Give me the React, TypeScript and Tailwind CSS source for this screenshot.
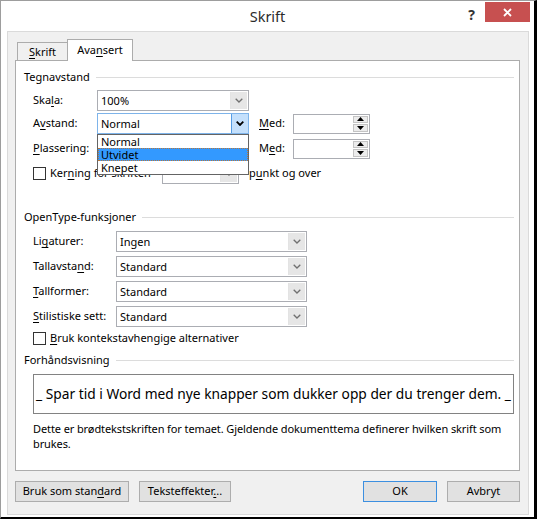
import React from 'react'

const FONT = "font-['Noto_Sans',sans-serif]"

// underlined access key letter
const U = ({ children }: { children: React.ReactNode }) => (
  <span className="underline decoration-1 underline-offset-[2px]">{children}</span>
)

const Chevron = ({ active }: { active?: boolean }) => (
  <svg width="8" height="5" viewBox="0 0 8 5" className={active ? 'text-black' : 'text-[#707070]'}>
    <path
      d="M0.7 0.7 L4 4 L7.3 0.7"
      fill="none"
      stroke="currentColor"
      strokeWidth={active ? 1.8 : 1.3}
    />
  </svg>
)

interface ComboProps {
  value?: string
  width: string
  active?: boolean
  children?: React.ReactNode
}

const Combo: React.FC<ComboProps> = ({ value, width, active, children }) => (
  <div
    className={`relative flex h-[21px] shrink-0 border bg-white ${width} ${
      active ? 'border-[#7eb4ea]' : 'border-[#abadb3]'
    }`}
  >
    <div className="flex-1 pl-[3px] leading-[19px]">{value}</div>
    <div
      className={`flex w-[17px] items-center justify-center border-l ${
        active ? 'border-[#569de5] bg-[#c4e0fc]' : 'my-px mr-px border-[#e3e3e3] bg-[#e6e6e6]'
      }`}
    >
      <Chevron active={active} />
    </div>
    {children}
  </div>
)

const Spin = () => (
  <div className="flex h-[20px] w-[77px] shrink-0 border border-[#abadb3] bg-white">
    <div className="flex-1" />
    <div className="my-px mr-px flex w-[15px] flex-col gap-px">
      <div className="flex flex-1 items-center justify-center border border-[#c4c4c4] bg-[#ececec]">
        <svg width="7" height="4" viewBox="0 0 7 4">
          <path d="M0 4 L3.5 0 L7 4 Z" fill="black" />
        </svg>
      </div>
      <div className="flex flex-1 items-center justify-center border border-[#c4c4c4] bg-[#ececec]">
        <svg width="7" height="4" viewBox="0 0 7 4">
          <path d="M0 0 L7 0 L3.5 4 Z" fill="black" />
        </svg>
      </div>
    </div>
  </div>
)

const Checkbox = () => <div className="h-[13px] w-[13px] shrink-0 border border-[#333] bg-white" />

const GroupHeader = ({ title, className }: { title: string; className: string }) => (
  <div className={`flex h-[16px] items-center pl-[8px] pr-[5px] ${className}`}>
    <span>{title}</span>
    <div className="ml-[6px] h-px flex-1 bg-[#dcdcdc]" />
  </div>
)

const Button = ({ children, width, primary }: { children: React.ReactNode; width: string; primary?: boolean }) => (
  <button
    type="button"
    className={`flex h-[21px] items-center justify-center border bg-[#e1e1e1] ${width} ${
      primary ? 'border-[#3c8fe0]' : 'border-[#adadad]'
    }`}
  >
    {children}
  </button>
)

const openTypeRows = [
  { label: <>Li<U>g</U>aturer:</>, value: 'Ingen' },
  { label: <>Tallavsta<U>n</U>d:</>, value: 'Standard' },
  { label: <><U>T</U>allformer:</>, value: 'Standard' },
  { label: <><U>S</U>tilistiske sett:</>, value: 'Standard' },
]

export default function App() {
  return (
    <div
      className={`${FONT} flex h-[519px] w-[537px] flex-col border-t border-l border-[#9d9d9d] border-r-[3px] border-b-2 border-r-black border-b-black bg-white text-[11px] text-black`}
    >
      {/* Title bar */}
      <div className="grid h-[30px] shrink-0 grid-cols-[1fr_auto_1fr]">
        <div />
        <div className="self-center pt-px text-[14.5px] text-[#2b2b2b]">Skrift</div>
        <div className="flex items-start justify-end pr-[4px]">
          <span className="mt-[3px] mr-[10px] text-[14px] font-bold text-[#333]">?</span>
          <div className="mt-px flex h-[20px] w-[45px] items-center justify-center bg-[#c75050]">
            <svg width="9" height="9" viewBox="0 0 9 9">
              <path d="M1 1 L8 8 M8 1 L1 8" stroke="white" strokeWidth="1.8" />
            </svg>
          </div>
        </div>
      </div>

      {/* Client area */}
      <div className="mr-[5px] mb-[2px] ml-[6px] flex flex-1 flex-col border border-[#dadada] bg-[#f0f0f0] pt-[7px] pr-[8px] pl-[7px]">
        {/* Tabs */}
        <div className="flex h-[21px] items-end pl-[2px]">
          <div className="flex h-[18px] w-[50px] items-center justify-center border-t border-l border-[#acacac] bg-[#f0f0f0] pt-px">
            <span>
              <U>S</U>krift
            </span>
          </div>
          <div className="relative z-10 -mb-px flex h-[22px] w-[66px] items-start justify-center border-x border-t border-[#acacac] bg-white pt-[2px]">
            <span>
              Ava<U>n</U>sert
            </span>
          </div>
        </div>

        {/* Tab panel */}
        <div className="flex h-[411px] flex-col border border-[#acacac] bg-white">
          <GroupHeader title="Tegnavstand" className="mt-[8px]" />

          <div className="mt-[5px] flex h-[21px] items-center pl-[17px]">
            <span className="w-[64px] shrink-0">
              Ska<U>l</U>a:
            </span>
            <Combo value="100%" width="w-[152px]" />
          </div>

          <div className="relative z-20 mt-[2px] flex h-[21px] items-center pl-[17px]">
            <span className="w-[64px] shrink-0">
              A<U>v</U>stand:
            </span>
            <Combo value="Normal" width="w-[152px]" active>
              {/* open drop-down list */}
              <div className="absolute top-[20px] -left-px w-[152px] border border-[#646464] bg-white leading-[13px]">
                <div className="h-[13px] pl-[3px]">Normal</div>
                <div className="h-[13px] border border-dotted border-[#b8763a] bg-[#3399ff] pl-[2px] leading-[11px]">
                  Utvidet
                </div>
                <div className="h-[13px] pl-[3px]">Knepet</div>
              </div>
            </Combo>
            <span className="ml-[10px] w-[34px] shrink-0">
              <U>M</U>ed:
            </span>
            <Spin />
          </div>

          <div className="mt-[4px] flex h-[21px] items-center pl-[17px]">
            <span className="w-[64px] shrink-0">
              <U>P</U>lassering:
            </span>
            <Combo value="" width="w-[152px]" />
            <span className="ml-[10px] w-[34px] shrink-0">
              M<U>e</U>d:
            </span>
            <Spin />
          </div>

          <div className="mt-[4px] flex h-[21px] items-center pl-[17px]">
            <div className="flex w-[129px] shrink-0 items-center gap-[4px]">
              <Checkbox />
              <span>
                Ker<U>n</U>ing for skriften
              </span>
            </div>
            <Combo value="" width="w-[77px]" />
            <span className="ml-[10px]">
              p<U>u</U>nkt og over
            </span>
          </div>

          <GroupHeader title="OpenType-funksjoner" className="mt-[25px]" />

          <div className="mt-[6px] flex flex-col gap-[4px] pl-[17px]">
            {openTypeRows.map((row, i) => (
              <div key={i} className="flex h-[21px] items-center">
                <span className="w-[83px] shrink-0">{row.label}</span>
                <Combo value={row.value} width="w-[191px]" />
              </div>
            ))}
          </div>

          <div className="mt-[3px] flex h-[16px] items-center gap-[4px] pl-[17px]">
            <Checkbox />
            <span>
              <U>B</U>ruk kontekstavhengige alternativer
            </span>
          </div>

          <GroupHeader title="Forhåndsvisning" className="mt-[6px]" />

          <div className="mt-[6px] mr-[5px] ml-[17px] flex h-[40px] items-center justify-center border border-[#828282] text-[13.75px] whitespace-nowrap">
            _ Spar tid i Word med nye knapper som dukker opp der du trenger dem. _
          </div>

          <p className="mt-[7px] pr-[4px] pl-[17px] leading-[15px] tracking-[-0.1px]">
            Dette er brødtekstskriften for temaet. Gjeldende dokumenttema definerer hvilken skrift som brukes.
          </p>
        </div>

        {/* Dialog buttons */}
        <div className="mt-[10px] flex h-[21px]">
          <Button width="w-[114px]">
            <span>
              Bruk som stan<U>d</U>ard
            </span>
          </Button>
          <Button width="ml-[10px] w-[92px]">
            <span>
              Teksteffekter<U>.</U>..
            </span>
          </Button>
          <Button width="ml-auto w-[74px]" primary>
            OK
          </Button>
          <Button width="ml-[10px] w-[73px]">Avbryt</Button>
        </div>
      </div>
    </div>
  )
}
